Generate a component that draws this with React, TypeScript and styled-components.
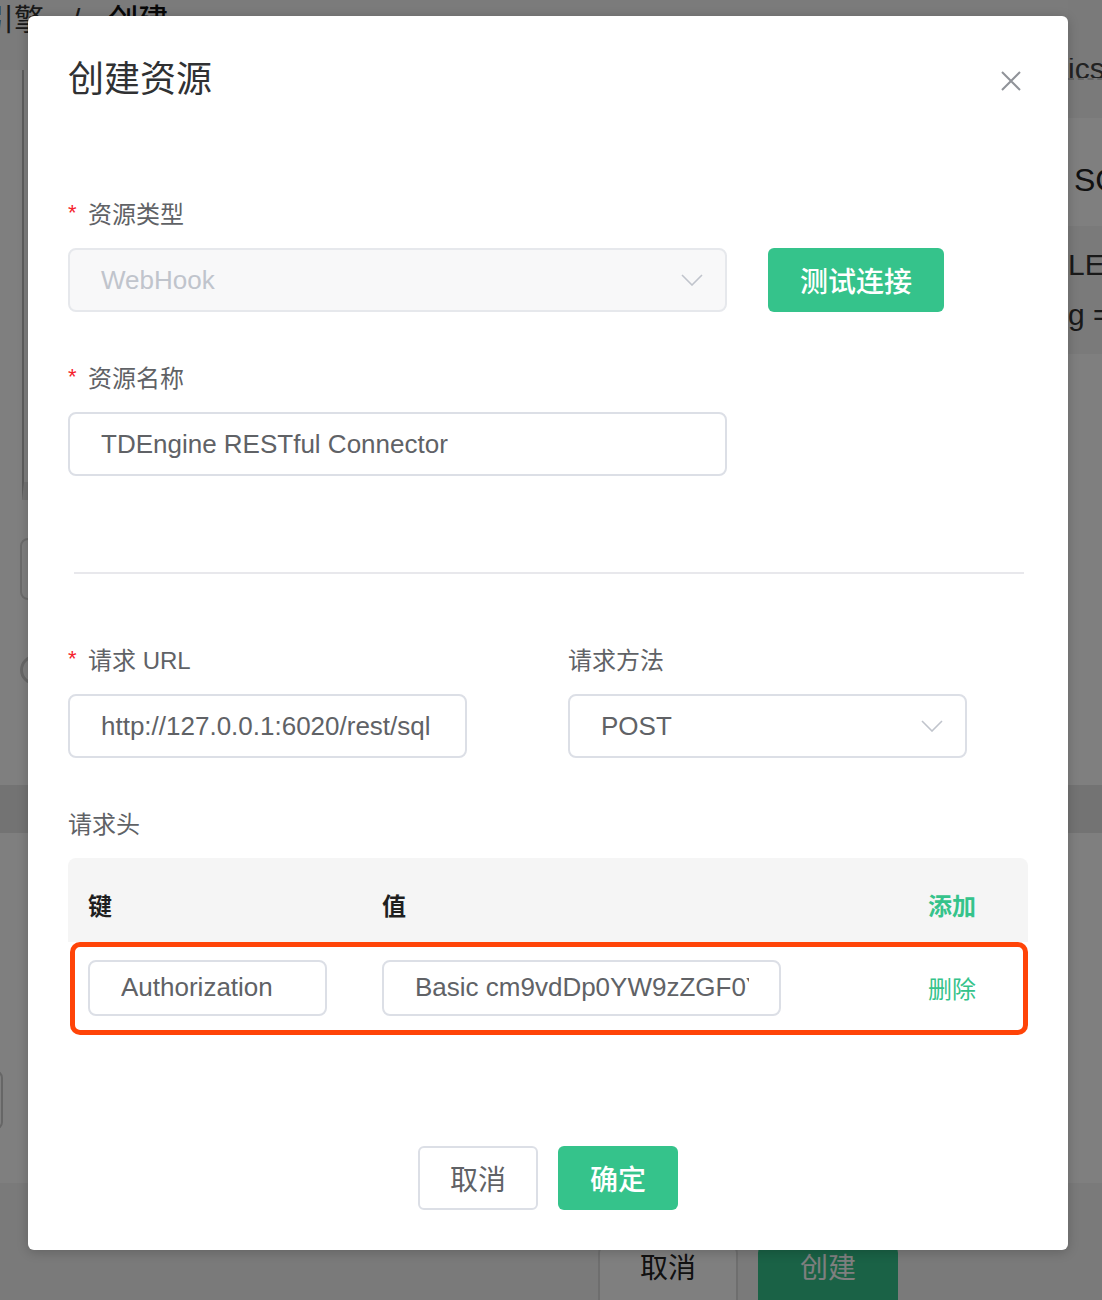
import React from 'react';
import styled, { createGlobalStyle } from 'styled-components';

const FONT = `"Liberation Sans", "Noto Sans CJK SC", sans-serif`;
const GREEN = '#35c38b';
const RED = '#f5222d';

const GlobalStyle = createGlobalStyle`
  html, body { margin: 0; padding: 0; }
  body { font-family: ${FONT}; overflow: hidden; background: #fff; }
  * { box-sizing: border-box; }
`;

/* ---------- background page (dimmed by overlay) ---------- */
const Page = styled.div`
  position: relative;
  width: 1102px;
  height: 1300px;
  overflow: hidden;
  background: #fff;
  display: flex;
  flex-direction: column;
  font-family: ${FONT};
`;

const TopBar = styled.header`
  height: 70px;
  flex: none;
  background: #f6f6f6;
  display: flex;
  align-items: flex-start;
  gap: 28px;
  margin-left: -16px;
  font-size: 30px;
  line-height: 40px;
  color: #222;
`;

const Crumb = styled.span<{ $strong?: boolean }>`
  font-weight: ${(p) => (p.$strong ? 500 : 400)};
  color: ${(p) => (p.$strong ? '#111' : '#333')};
`;

const Upper = styled.div`
  height: 715px;
  flex: none;
  display: grid;
  grid-template-columns: 1068px 1fr;
`;

const LeftCol = styled.div`
  padding-left: 22px;
  display: flex;
  flex-direction: column;
`;

const EditorBox = styled.div`
  height: 430px;
  border-left: 2px solid #bbb;
  border-bottom: 18px solid #e6e6e6;
  background: #fff;
`;

const GhostInput = styled.div`
  margin-top: 38px;
  margin-left: -2px;
  height: 62px;
  width: 400px;
  border: 2px solid #d6d6d6;
  border-radius: 8px;
`;

const GhostRadio = styled.div`
  margin-top: 55px;
  margin-left: -2px;
  width: 30px;
  height: 30px;
  border-radius: 50%;
  border: 3px solid #d0d0d0;
`;

const RightCol = styled.div`
  display: flex;
  flex-direction: column;
  background: #f4f4f4;
  margin-top: -70px;
  padding-top: 58px;
`;

const TabStrip = styled.div`
  height: 22px;
  font-size: 30px;
  line-height: 22px;
  color: #444;
  white-space: nowrap;
  overflow: hidden;
  border-bottom: 2px dashed #c8c8c8;
  margin-bottom: 38px;
`;

const SideCard = styled.div`
  flex: 1;
  background: #fff;
  padding-top: 46px;
  display: flex;
  flex-direction: column;
  white-space: nowrap;
  overflow: hidden;
`;

const SideTitle = styled.div`
  border-left: 4px solid #2c5fd8;
  padding-left: 6px;
  margin-left: -4px;
  font-size: 32px;
  line-height: 32px;
  color: #222;
`;

const SideCode = styled.div`
  margin-top: 30px;
  padding: 14px 0;
  background: #f5f5f5;
  font-size: 30px;
  line-height: 50px;
  color: #333;
`;

const Band = styled.div`
  height: 48px;
  flex: none;
  background: #e6e6e6;
`;

const Lower = styled.div`
  height: 350px;
  flex: none;
  padding-top: 237px;
`;

const GhostButtonEdge = styled.div`
  width: 60px;
  height: 60px;
  margin-left: -57px;
  border: 2px solid #ccc;
  border-radius: 8px;
`;

const PageFooter = styled.footer`
  flex: 1;
  background: #f4f4f4;
  display: flex;
  gap: 20px;
  padding: 62px 0 0 598px;
`;

const PageButton = styled.div<{ $primary?: boolean }>`
  width: 140px;
  height: 70px;
  border-radius: 8px;
  display: flex;
  align-items: center;
  justify-content: center;
  font-size: 28px;
  padding-bottom: 28px;
  background: ${(p) => (p.$primary ? '#35c48c' : '#fff')};
  color: ${(p) => (p.$primary ? '#fff' : '#222')};
  border: 2px solid ${(p) => (p.$primary ? '#35c48c' : '#ddd')};
`;

/* ---------- modal ---------- */
const Overlay = styled.div`
  position: absolute;
  inset: 0;
  background: rgba(0, 0, 0, 0.5);
  padding: 16px 0 0 28px;
`;

const Dialog = styled.div`
  width: 1040px;
  height: 1234px;
  background: #fff;
  border-radius: 6px;
  padding: 42px 40px 40px;
  display: flex;
  flex-direction: column;
  font-family: ${FONT};
  box-shadow: 0 2px 12px rgba(0, 0, 0, 0.2);
`;

const DialogHeader = styled.div`
  height: 44px;
  display: flex;
  align-items: center;
  justify-content: space-between;
`;

const Title = styled.h2`
  margin: 0;
  font-size: 36px;
  line-height: 44px;
  font-weight: 400;
  color: #303133;
`;

const CloseButton = styled.button`
  border: none;
  background: none;
  padding: 0;
  margin: 2px 7px 0 0;
  width: 20px;
  height: 20px;
  display: flex;
  cursor: pointer;
`;

const Body = styled.div`
  margin-top: 97px;
  display: flex;
  flex-direction: column;
`;

const FormItem = styled.div`
  display: flex;
  flex-direction: column;
  margin-bottom: 51px;
`;

const Label = styled.label`
  display: flex;
  align-items: center;
  gap: 10px;
  height: 32px;
  margin-bottom: 17px;
  font-size: 24px;
  line-height: 32px;
  color: #606266;
`;

const Star = styled.span`
  color: ${RED};
  font-size: 22px;
  width: 10px;
  margin-top: -4px;
`;

const ControlRow = styled.div`
  display: flex;
  align-items: center;
  gap: 41px;
`;

const Field = styled.div<{ $width: number; $disabled?: boolean }>`
  width: ${(p) => p.$width}px;
  height: 64px;
  border: 2px solid ${(p) => (p.$disabled ? '#e6e8ec' : '#dcdfe6')};
  background: ${(p) => (p.$disabled ? '#f8f8f9' : '#fff')};
  border-radius: 8px;
  display: flex;
  align-items: center;
  padding: 0 22px 0 31px;
`;

const TextInput = styled.input<{ $height?: number }>`
  width: 100%;
  height: ${(p) => p.$height ?? 60}px;
  border: none;
  outline: none;
  background: transparent;
  padding: 0;
  font-family: ${FONT};
  font-size: 26px;
  color: #606266;
`;

const SelectValue = styled.span<{ $muted?: boolean }>`
  flex: 1;
  font-size: 26px;
  color: ${(p) => (p.$muted ? '#c0c4cc' : '#606266')};
`;

const Chevron = styled.svg`
  flex: none;
  width: 22px;
  height: 12px;
`;

const PrimaryButton = styled.button<{ $w: number }>`
  width: ${(p) => p.$w}px;
  height: 64px;
  border: none;
  border-radius: 6px;
  background: ${GREEN};
  color: #fff;
  font-family: ${FONT};
  font-size: 28px;
  font-weight: 500;
  cursor: pointer;
`;

const DefaultButton = styled.button`
  width: 120px;
  height: 64px;
  border: 2px solid #dcdfe6;
  border-radius: 6px;
  background: #fff;
  color: #606266;
  font-family: ${FONT};
  font-size: 28px;
  cursor: pointer;
`;

const Divider = styled.hr`
  margin: 45px 4px 71px 6px;
  border: none;
  height: 2px;
  background: #e8e8ec;
`;

const TwoCols = styled.div`
  display: grid;
  grid-template-columns: 500px 1fr;
`;

const InputWrap = styled.div<{ $width: number; $height: number }>`
  width: ${(p) => p.$width}px;
  height: ${(p) => p.$height}px;
  border: 2px solid #dcdfe6;
  border-radius: 8px;
  background: #fff;
  padding: 0 30px 0 31px;
  display: flex;
  align-items: center;
`;

const Table = styled.div`
  width: 960px;
  display: flex;
  flex-direction: column;
`;

const HeadRow = styled.div`
  height: 84px;
  display: grid;
  grid-template-columns: 294px 546px 120px;
  background: #f5f5f5;
  border-radius: 8px 8px 0 0;
`;

const HeadCell = styled.div<{ $action?: boolean }>`
  display: flex;
  align-items: center;
  padding: 8px 0 0 20px;
  font-size: 24px;
  font-weight: 700;
  color: ${(p) => (p.$action ? GREEN : '#1f1f1f')};
`;

const BodyRow = styled.div`
  height: 93px;
  display: grid;
  grid-template-columns: 294px 546px 120px;
  border-radius: 10px;
  box-shadow: inset 0 0 0 5px #ff4408;
  margin-left: 2px;
`;

const BodyCell = styled.div`
  display: flex;
  align-items: center;
  padding: 0 0 2px 18px;
  font-size: 24px;
  color: ${GREEN};
`;

const LinkText = styled.span`
  cursor: pointer;
`;

const Footer = styled.div`
  margin-top: auto;
  display: flex;
  justify-content: center;
  gap: 20px;
`;

const ChevronIcon = () => (
  <Chevron viewBox="0 0 22 12">
    <polyline points="1,1 11,11 21,1" fill="none" stroke="#c0c4cc" strokeWidth="1.6" />
  </Chevron>
);

export default function App() {
  return (
    <>
      <GlobalStyle />
      <Page>
        <TopBar>
          <Crumb>引擎</Crumb>
          <Crumb>/</Crumb>
          <Crumb $strong>创建</Crumb>
        </TopBar>
        <Upper>
          <LeftCol>
            <EditorBox />
            <GhostInput />
            <GhostRadio />
          </LeftCol>
          <RightCol>
            <TabStrip>ics</TabStrip>
            <SideCard>
              <SideTitle>SCHEMA</SideTitle>
              <SideCode>
                <div>LECT</div>
                <div>g = 1</div>
              </SideCode>
            </SideCard>
          </RightCol>
        </Upper>
        <Band />
        <Lower>
          <GhostButtonEdge />
        </Lower>
        <PageFooter>
          <PageButton>取消</PageButton>
          <PageButton $primary>创建</PageButton>
        </PageFooter>

        <Overlay>
          <Dialog>
            <DialogHeader>
              <Title>创建资源</Title>
              <CloseButton aria-label="close">
                <svg width="20" height="20" viewBox="0 0 20 20">
                  <path d="M1 1 L19 19 M19 1 L1 19" stroke="#909399" strokeWidth="2" fill="none" />
                </svg>
              </CloseButton>
            </DialogHeader>

            <Body>
              <FormItem>
                <Label>
                  <Star>*</Star>资源类型
                </Label>
                <ControlRow>
                  <Field $width={659} $disabled>
                    <SelectValue $muted>WebHook</SelectValue>
                    <ChevronIcon />
                  </Field>
                  <PrimaryButton $w={176}>测试连接</PrimaryButton>
                </ControlRow>
              </FormItem>

              <FormItem>
                <Label>
                  <Star>*</Star>资源名称
                </Label>
                <InputWrap $width={659} $height={64}>
                  <TextInput readOnly value="TDEngine RESTful Connector" />
                </InputWrap>
              </FormItem>

              <Divider />

              <TwoCols>
                <FormItem>
                  <Label>
                    <Star>*</Star>请求 URL
                  </Label>
                  <InputWrap $width={399} $height={64}>
                    <TextInput readOnly value="http://127.0.0.1:6020/rest/sql" />
                  </InputWrap>
                </FormItem>
                <FormItem>
                  <Label>请求方法</Label>
                  <Field $width={399}>
                    <SelectValue>POST</SelectValue>
                    <ChevronIcon />
                  </Field>
                </FormItem>
              </TwoCols>

              <Label>请求头</Label>
              <Table>
                <HeadRow>
                  <HeadCell>键</HeadCell>
                  <HeadCell>值</HeadCell>
                  <HeadCell $action>添加</HeadCell>
                </HeadRow>
                <BodyRow>
                  <BodyCell>
                    <InputWrap $width={239} $height={56}>
                      <TextInput $height={52} readOnly value="Authorization" />
                    </InputWrap>
                  </BodyCell>
                  <BodyCell>
                    <InputWrap $width={399} $height={56}>
                      <TextInput $height={52} readOnly value="Basic cm9vdDp0YW9zZGF0YQ==" />
                    </InputWrap>
                  </BodyCell>
                  <BodyCell>
                    <LinkText>删除</LinkText>
                  </BodyCell>
                </BodyRow>
              </Table>
            </Body>

            <Footer>
              <DefaultButton>取消</DefaultButton>
              <PrimaryButton $w={120}>确定</PrimaryButton>
            </Footer>
          </Dialog>
        </Overlay>
      </Page>
    </>
  );
}
